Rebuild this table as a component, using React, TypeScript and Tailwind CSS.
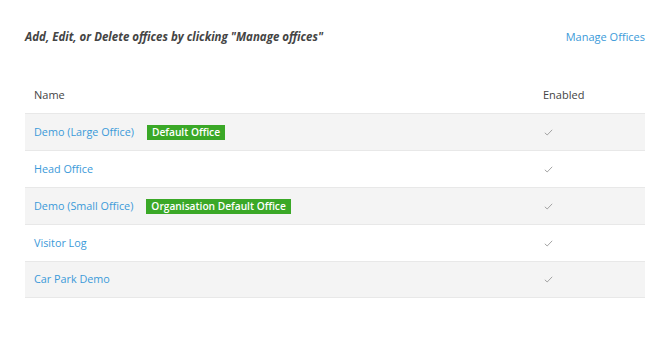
export default function App() {
  const rows = [
    { name: "Demo (Large Office)", badge: "Default Office" },
    { name: "Head Office" },
    { name: "Demo (Small Office)", badge: "Organisation Default Office" },
    { name: "Visitor Log" },
    { name: "Car Park Demo" },
  ];
  return (
    <div className="w-[670px] h-[339px] bg-white px-[25px] pt-[29px]" style={{ fontFamily: '"Open Sans", sans-serif' }}>
      <div className="flex items-center justify-between h-[16px]">
        <div className="text-[11.5px] font-bold italic text-[#444]">Add, Edit, or Delete offices by clicking "Manage offices"</div>
        <div className="text-[11px] text-[#3b9ad9]">Manage Offices</div>
      </div>
      <div className="mt-[32px]">
        <div className="flex items-center h-[36px] text-[11px] text-[#444]">
          <div className="flex-1 pl-[9px]">Name</div>
          <div className="w-[102px]">Enabled</div>
        </div>
        {rows.map((r, i) => (
          <div
            key={i}
            className={`flex items-center h-[37px] border-t border-[#e8e8e8] text-[10.8px] ${i % 2 === 0 ? "bg-[#f4f4f4]" : "bg-white"} ${i === rows.length - 1 ? "border-b" : ""}`}
          >
            <div className="flex-1 pl-[9px] flex items-center">
              <span className="text-[#3b9ad9]">{r.name}</span>
              {r.badge && (
                <span className="ml-[13px] bg-[#3aa827] text-white font-semibold px-[5px] h-[15px] leading-[15px] text-[10.2px]">{r.badge}</span>
              )}
            </div>
            <div className="w-[102px] pl-[1px]">
              <svg width="9" height="7" viewBox="0 0 9 7" fill="none">
                <path d="M0.8 3.8 L3.2 6 L8.2 0.8" stroke="#9a9a9a" strokeWidth="0.9" />
              </svg>
            </div>
          </div>
        ))}
      </div>
    </div>
  );
}
